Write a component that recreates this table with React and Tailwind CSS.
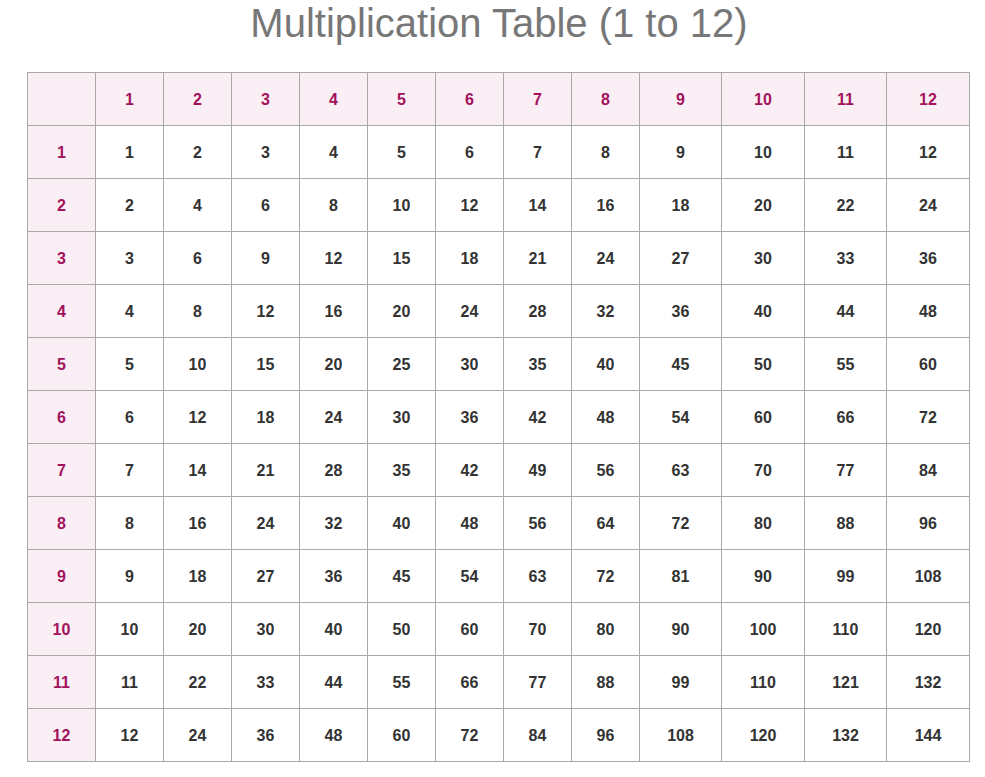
import React from 'react';

// Multiplication table 1..12 with a tinted header row and header column.
const NUMS = Array.from({ length: 12 }, (_, i) => i + 1);
const COL_WIDTHS = ['w-[68px]', 'w-[68px]', 'w-[68px]', 'w-[68px]', 'w-[68px]', 'w-[68px]', 'w-[68px]', 'w-[68px]', 'w-[68px]', 'w-[82px]', 'w-[83px]', 'w-[82px]', 'w-[83px]'];

const App = () => {
  return (
    <div className="min-h-[777px] bg-white font-['Liberation_Sans',Arial,sans-serif]">
      <h1 className="pl-[13px] text-center text-[40px] leading-[46px] font-normal text-[#777777]">Multiplication Table (1 to 12)</h1>

      <table className="ml-[27px] mt-[26px] w-[942px] table-fixed border-collapse text-[16px] font-bold">
        <colgroup>
          {COL_WIDTHS.map((w, i) => <col key={i} className={w} />)}
        </colgroup>
        <thead>
          <tr className="h-[53px] bg-[#f9eff4]">
            <th className="border border-[#a9a9a9]" />
            {NUMS.map(n => (
              <th key={n} className="border border-[#a9a9a9] pt-[2px] text-center text-[#a3125d]">{n}</th>
            ))}
          </tr>
        </thead>
        <tbody>
          {NUMS.map(r => (
            <tr key={r} className="h-[53px]">
              <th className="border border-[#a9a9a9] bg-[#f9eff4] pt-[2px] text-center text-[#a3125d]">{r}</th>
              {NUMS.map(c => (
                <td key={c} className="border border-[#a9a9a9] pt-[2px] text-center text-[#333333]">{r * c}</td>
              ))}
            </tr>
          ))}
        </tbody>
      </table>
    </div>
  );
};

export default App;
